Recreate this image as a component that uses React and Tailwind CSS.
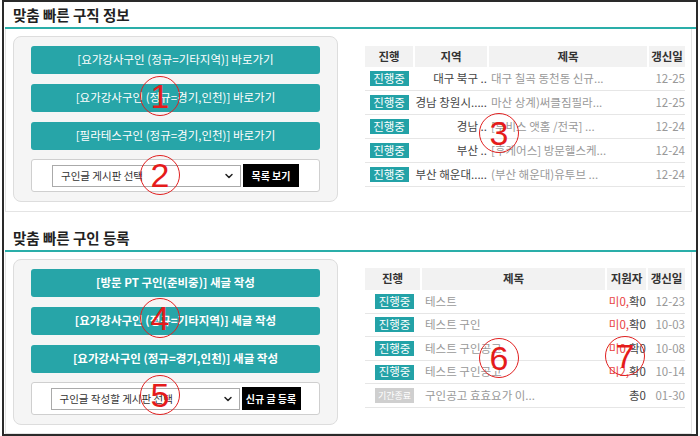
import { ChevronDown } from "lucide-react";

const FONT = { fontFamily: '"Noto Sans CJK KR", "Noto Sans", sans-serif' };

const jobRows = [
  { region: "대구 북구 ..", title: "대구 칠곡 동천동 신규...", date: "12-25" },
  { region: "경남 창원시.....", title: "마산 상계)써클짐필라...", date: "12-25" },
  { region: "경남 ..", title: "[투비스 앳홈 /전국] ...", date: "12-24" },
  { region: "부산 ..", title: "[후케어스] 방문헬스케...", date: "12-24" },
  { region: "부산 해운대.....", title: "(부산 해운대)유투브 ...", date: "12-24" },
];

const postRows = [
  { active: true, title: "테스트", pending: "미0,", total: "확0", date: "12-23" },
  { active: true, title: "테스트 구인", pending: "미0,", total: "확0", date: "10-03" },
  { active: true, title: "테스트 구인공고", pending: "미0,", total: "확0", date: "10-08" },
  { active: true, title: "테스트 구인공고", pending: "미2,", total: "확0", date: "10-14" },
  { active: false, title: "구인공고 효효요가 이...", pending: "", total: "총0", date: "01-30" },
];

const marks = [
  { n: "1", left: 140, top: 76 },
  { n: "2", left: 140, top: 155 },
  { n: "3", left: 479, top: 113 },
  { n: "4", left: 140, top: 298 },
  { n: "5", left: 140, top: 375 },
  { n: "6", left: 479, top: 338 },
  { n: "7", left: 605, top: 336 },
];

function Badge({ active = true }) {
  return (
    <span
      className={`inline-flex h-[15px] w-[39px] items-center justify-center whitespace-nowrap leading-none text-white ${
        active ? "bg-[#23a2a7] text-[11.5px]" : "bg-[#cfcfcf] text-[9px]"
      }`}
    >
      {active ? "진행중" : "기간종료"}
    </span>
  );
}

function QuickButton({ label, bold }) {
  return (
    <div
      className={`flex h-[28px] items-center justify-center rounded-[3px] bg-[#27a5a8] text-[11.5px] text-white ${
        bold ? "font-semibold" : ""
      }`}
    >
      {label}
    </div>
  );
}

function Picker({ placeholder, action, actionWidth }) {
  return (
    <div className="flex h-[33px] items-center justify-center gap-[2px] rounded-[3px] border border-[#cfcfcf] bg-white">
      <div className="flex h-[22px] w-[189px] items-center justify-between border border-[#aaaaaa] bg-white pl-[8px] pr-[5px] text-[10.5px] text-[#333]">
        <span>{placeholder}</span>
        <ChevronDown className="h-[12px] w-[12px] text-[#222]" strokeWidth={3} />
      </div>
      <div
        className={`flex h-[23px] items-center justify-center bg-black text-[10px] font-bold text-white ${actionWidth}`}
      >
        {action}
      </div>
    </div>
  );
}

function Panel({ buttons, placeholder, action, actionWidth, bold }) {
  return (
    <div className="flex w-[325px] flex-col gap-[10px] rounded-[8px] border border-[#dddddd] bg-[#f5f5f5] px-[17px] pb-[9px] pt-[9px]">
      {buttons.map((label) => (
        <QuickButton key={label} label={label} bold={bold} />
      ))}
      <div className="-mt-[1px]">
        <Picker placeholder={placeholder} action={action} actionWidth={actionWidth} />
      </div>
    </div>
  );
}

function Section({ title, children, gap }) {
  return (
    <div className={gap}>
      <div className="flex h-[25px] items-center pl-[9px] pt-[1px] text-[14.5px] font-bold text-[#222]">{title}</div>
      <div className="ml-[1px] border-t-2 border-[#2aaea9]">
        <div className="w-[687px] border-x border-b border-[#e4e4e4] pl-[7px] pt-[7px]">{children}</div>
      </div>
    </div>
  );
}

function JobTable() {
  const cols = "grid grid-cols-[48px_72px_158px_36px] gap-x-[2px]";
  return (
    <div className="w-[320px] text-[11.5px]">
      <div className={`${cols} h-[21px] font-bold text-[#333]`}>
        {["진행", "지역", "제목", "갱신일"].map((h) => (
          <div key={h} className="flex items-center justify-center bg-[#f2f2f2]">
            {h}
          </div>
        ))}
      </div>
      {jobRows.map((row) => (
        <div key={row.region + row.date} className={`${cols} h-[24px] border-b border-[#e6e6e6]`}>
          <div className="flex items-center justify-center">
            <Badge />
          </div>
          <div className="flex items-center justify-end text-[#444]">{row.region}</div>
          <div className="flex items-center pl-[2px] text-[#999]">{row.title}</div>
          <div className="flex items-center justify-end text-[#999]">{row.date}</div>
        </div>
      ))}
    </div>
  );
}

function PostTable() {
  const cols = "grid grid-cols-[55px_183px_39px_37px] gap-x-[2px]";
  return (
    <div className="w-[320px] text-[11.5px]">
      <div className={`${cols} h-[22px] font-bold text-[#333]`}>
        {["진행", "제목", "지원자", "갱신일"].map((h) => (
          <div key={h} className="flex items-center justify-center bg-[#f2f2f2]">
            {h}
          </div>
        ))}
      </div>
      {postRows.map((row) => (
        <div key={row.date} className={`${cols} h-[23.6px] border-b border-[#e6e6e6]`}>
          <div className="flex items-center justify-center pl-[4px]">
            <Badge active={row.active} />
          </div>
          <div className="flex items-center pl-[3px] text-[#999]">{row.title}</div>
          <div className="flex items-center justify-end whitespace-nowrap text-[#444]">
            <span className="text-[#e8413f]">{row.pending}</span>
            {row.total}
          </div>
          <div className="flex items-center justify-end text-[#999]">{row.date}</div>
        </div>
      ))}
    </div>
  );
}

export default function App() {
  return (
    <div className="relative h-[436px] w-[700px] bg-white" style={FONT}>
      <div className="ml-[2px] h-[436px] w-[696px] border-2 border-[#2a2a2a]">
        <Section title="맞춤 빠른 구직 정보">
          <div className="flex">
            <Panel
              buttons={[
                "[요가강사구인 (정규=기타지역)] 바로가기",
                "[요가강사구인 (정규=경기,인천)] 바로가기",
                "[필라테스구인 (정규=경기,인천)] 바로가기",
              ]}
              placeholder="구인글 게시판 선택"
              action="목록 보기"
              actionWidth="w-[56px]"
            />
            <div className="ml-[27px] mt-[10px]">
              <JobTable />
            </div>
          </div>
          <div className="h-[9px]" />
        </Section>
        <Section title="맞춤 빠른 구인 등록" gap="mt-[13px]">
          <div className="flex">
            <Panel
              buttons={[
                "[방문 PT 구인(준비중)] 새글 작성",
                "[요가강사구인 (정규=기타지역)] 새글 작성",
                "[요가강사구인 (정규=경기,인천)] 새글 작성",
              ]}
              placeholder="구인글 작성할 게시판 선택"
              action="신규 글 등록"
              actionWidth="w-[59px]"
              bold
            />
            <div className="ml-[27px] mt-[9px]">
              <PostTable />
            </div>
          </div>
          <div className="h-[8px]" />
        </Section>
      </div>
      {marks.map((m) => (
        <div
          key={m.n}
          className="absolute flex h-[40px] w-[40px] items-center justify-center rounded-full border border-[#e02020] text-[34px] leading-none text-[#e51b1b]"
          style={{ left: m.left, top: m.top, fontFamily: '"Liberation Sans", Arial, sans-serif' }}
        >
          {m.n}
        </div>
      ))}
    </div>
  );
}
